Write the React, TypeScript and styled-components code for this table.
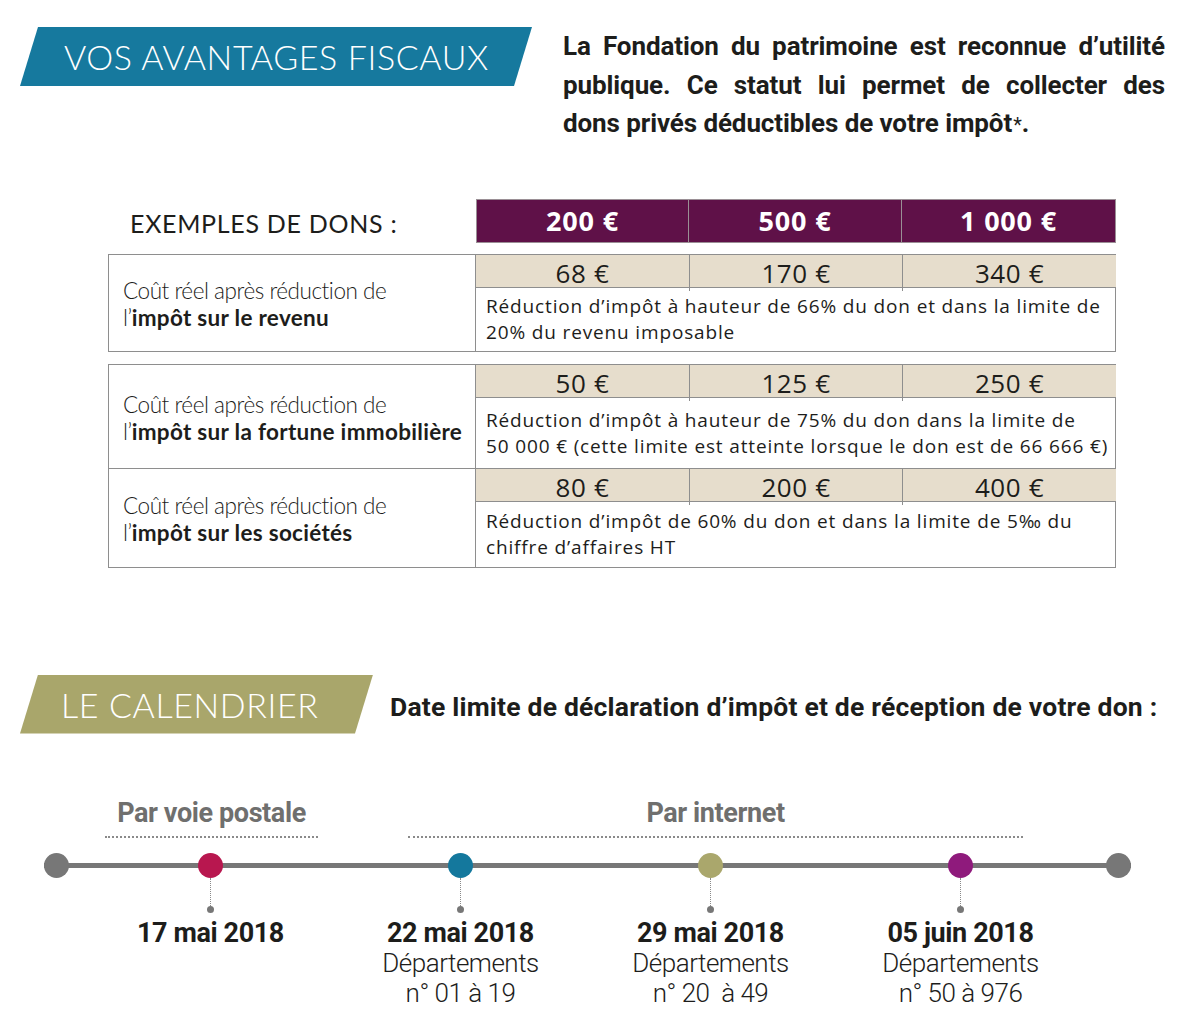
import React from "react";
import styled, { createGlobalStyle } from "styled-components";

const Global = createGlobalStyle`
  html, body { margin: 0; padding: 0; background: #ffffff; }
  body { font-family: "Open Sans", "Liberation Sans", sans-serif; color: #1d1d1b; }
  * { box-sizing: border-box; }
`;

const Page = styled.div`
  width: 1200px;
  height: 1023px;
  overflow: hidden;
  padding-top: 27px;
`;

const Intro = styled.section`
  display: flex;
  align-items: flex-start;
`;

const Banner = styled.div<{ $bg: string; $w: number; $pad: number }>`
  margin-left: 20px;
  width: ${(p) => p.$w}px;
  height: 59px;
  flex: none;
  background: ${(p) => p.$bg};
  clip-path: polygon(18px 0, 100% 0, calc(100% - 18px) 100%, 0 100%);
  display: flex;
  align-items: center;
  padding-left: ${(p) => p.$pad}px;
  color: #ffffff;
  font-family: "Lato", "Liberation Sans", sans-serif;
  font-weight: 300;
  font-size: 34px;
  letter-spacing: 0.6px;
  white-space: nowrap;
`;

const Lead = styled.div`
  margin: 0 0 0 31px;
  width: 602px;
  font-family: "Roboto", "Liberation Sans", sans-serif;
  font-weight: 700;
  font-size: 26px;
  line-height: 38.5px;
  letter-spacing: -0.1px;
  color: #1d1d1b;
`;

const LeadLine = styled.div<{ $last?: boolean }>`
  text-align: ${(p) => (p.$last ? "left" : "justify")};
  text-align-last: ${(p) => (p.$last ? "left" : "justify")};
  white-space: nowrap;
`;

const Star = styled.span`
  font-weight: 400;
  font-size: 20px;
  margin-left: 1px;
`;

const Table = styled.section`
  margin: 54px 0 0 108px;
  width: 1008px;
  display: flex;
  flex-direction: column;
`;

const HeaderRow = styled.div`
  display: grid;
  grid-template-columns: 368px 213px 213px 214px;
  height: 44px;
`;

const HeaderLabel = styled.div`
  display: flex;
  align-items: center;
  padding-left: 22px;
  padding-top: 4px;
  font-family: "Lato", "Liberation Sans", sans-serif;
  font-size: 25px;
  font-weight: 400;
  letter-spacing: 0.7px;
  color: #1d1d1b;
`;

const HeaderCell = styled.div`
  background: #5f1148;
  border: 1px solid #9a8f95;
  border-left-width: 0;
  &:nth-child(2) { border-left-width: 1px; }
  display: flex;
  align-items: center;
  justify-content: center;
  color: #ffffff;
  font-family: "Open Sans", "Liberation Sans", sans-serif;
  font-weight: 700;
  font-size: 27px;
  letter-spacing: 0.8px;
`;

const Group = styled.div<{ $mt: number }>`
  margin-top: ${(p) => p.$mt}px;
  border: 1px solid #8e8e8e;
  display: flex;
  flex-direction: column;
`;

const Row = styled.div<{ $divider?: boolean }>`
  display: grid;
  grid-template-columns: 367px 640px;
  border-top: ${(p) => (p.$divider ? "1px solid #8e8e8e" : "none")};
`;

const Label = styled.div`
  border-right: 1px solid #8e8e8e;
  display: flex;
  flex-direction: column;
  justify-content: center;
  padding: 3px 0 0 14px;
  font-family: "Lato", "Liberation Sans", sans-serif;
  font-weight: 300;
  font-size: 22.5px;
  line-height: 27px;
  letter-spacing: -0.45px;
  color: #1d1d1b;
  white-space: nowrap;
`;

const Strong = styled.strong`
  font-weight: 700;
  letter-spacing: 0.3px;
`;

const Detail = styled.div`
  display: flex;
  flex-direction: column;
`;

const Amounts = styled.div`
  display: grid;
  grid-template-columns: 213px 213px 214px;
  height: 33px;
  background: #e6ddcc;
  border-bottom: 1px solid #8e8e8e;
`;

const Amount = styled.div`
  display: flex;
  align-items: center;
  justify-content: center;
  border-left: 1px solid #8e8e8e;
  &:first-child { border-left: none; }
  font-family: "Open Sans", "Liberation Sans", sans-serif;
  font-weight: 400;
  font-size: 26px;
  letter-spacing: 0.6px;
  color: #1d1d1b;
`;

const Note = styled.div<{ $h: number }>`
  height: ${(p) => p.$h}px;
  display: flex;
  align-items: center;
  padding: 0 6px 0 10px;
  font-family: "Open Sans", "Liberation Sans", sans-serif;
  font-size: 19px;
  line-height: 26px;
  letter-spacing: 0.85px;
  color: #1d1d1b;
  white-space: nowrap;
`;

const Calendar = styled.section`
  margin-top: 107px;
`;

const CalHead = styled.div`
  display: flex;
  align-items: center;
`;

const CalTitle = styled.h2`
  margin: 4px 0 0 17px;
  font-family: "Roboto", "Liberation Sans", sans-serif;
  font-weight: 700;
  font-size: 26.5px;
  letter-spacing: 0.2px;
  color: #1d1d1b;
  white-space: nowrap;
`;

const Channels = styled.div`
  display: flex;
  margin-top: 64px;
  padding-left: 105px;
  gap: 90px;
`;

const Channel = styled.div<{ $w: number }>`
  width: ${(p) => p.$w}px;
  text-align: center;
  font-family: "Roboto", "Liberation Sans", sans-serif;
  font-weight: 700;
  font-size: 27px;
  line-height: 30px;
  letter-spacing: -0.4px;
  color: #6f6f6e;
  padding-bottom: 8px;
  border-bottom: 2px dotted #8a8a8a;
`;

const Timeline = styled.div`
  margin: 15px 0 0 44px;
  width: 1087px;
  display: flex;
  justify-content: space-between;
  align-items: flex-start;
  background: linear-gradient(#777777, #777777) no-repeat 0 10px / 100% 5px;
`;

const Dot = styled.div<{ $c: string }>`
  width: 25px;
  height: 25px;
  border-radius: 50%;
  background: ${(p) => p.$c};
  flex: none;
`;

const Steps = styled.div`
  display: grid;
  grid-template-columns: repeat(4, 250px);
  margin-left: -4px;
`;

const Step = styled.div`
  display: flex;
  flex-direction: column;
  align-items: center;
`;

const Connector = styled.div`
  width: 0;
  height: 28px;
  border-left: 1px dotted #8a8a8a;
`;

const Pin = styled.div`
  width: 7px;
  height: 7px;
  border-radius: 50%;
  background: #777777;
`;

const Date = styled.div`
  margin-top: 5px;
  font-family: "Roboto", "Liberation Sans", sans-serif;
  font-weight: 700;
  font-size: 27px;
  line-height: 30px;
  letter-spacing: -0.4px;
  color: #1d1d1b;
`;

const Sub = styled.div`
  font-family: "Roboto", "Liberation Sans", sans-serif;
  font-weight: 300;
  font-size: 26px;
  line-height: 30px;
  letter-spacing: -0.5px;
  color: #1d1d1b;
  text-align: center;
`;

type Group = {
  amounts: string[];
  bold: string;
  lines: [string, string];
  h: number;
};

const TaxRow: React.FC<{ g: Group; divider?: boolean }> = ({ g, divider }) => (
  <Row $divider={divider}>
    <Label>
      <span>Coût réel après réduction de</span>
      <span>
        l’<Strong>{g.bold}</Strong>
      </span>
    </Label>
    <Detail>
      <Amounts>
        {g.amounts.map((a) => (
          <Amount key={a}>{a}</Amount>
        ))}
      </Amounts>
      <Note $h={g.h}>
        <span>
          {g.lines[0]}
          <br />
          {g.lines[1]}
        </span>
      </Note>
    </Detail>
  </Row>
);

const revenu: Group = {
  amounts: ["68 €", "170 €", "340 €"],
  bold: "impôt sur le revenu",
  lines: [
    "Réduction d’impôt à hauteur de 66% du don et dans la limite de",
    "20% du revenu imposable",
  ],
  h: 63,
};

const fortune: Group = {
  amounts: ["50 €", "125 €", "250 €"],
  bold: "impôt sur la fortune immobilière",
  lines: [
    "Réduction d’impôt à hauteur de 75% du don dans la limite de",
    "50 000 € (cette limite est atteinte lorsque le don est de 66 666 €)",
  ],
  h: 70,
};

const societes: Group = {
  amounts: ["80 €", "200 €", "400 €"],
  bold: "impôt sur les sociétés",
  lines: [
    "Réduction d’impôt de 60% du don et dans la limite de 5‰ du",
    "chiffre d’affaires HT",
  ],
  h: 65,
};

const steps = [
  { c: "#b8174f", date: "17 mai 2018" },
  { c: "#14789d", date: "22 mai 2018", dep: "n° 01 à 19" },
  { c: "#aaa76c", date: "29 mai 2018", dep: "n° 20\u00a0 à 49" },
  { c: "#8f1a7c", date: "05 juin 2018", dep: "n° 50 à 976" },
];

const App: React.FC = () => (
  <Page>
    <Global />
    <Intro>
      <Banner $bg="#16799e" $w={512} $pad={44}>
        VOS AVANTAGES FISCAUX
      </Banner>
      <Lead>
        <LeadLine>La Fondation du patrimoine est reconnue d’utilité</LeadLine>
        <LeadLine>publique. Ce statut lui permet de collecter des</LeadLine>
        <LeadLine $last>
          dons privés déductibles de votre impôt<Star>*</Star>.
        </LeadLine>
      </Lead>
    </Intro>

    <Table>
      <HeaderRow>
        <HeaderLabel>EXEMPLES DE DONS :</HeaderLabel>
        <HeaderCell>200 €</HeaderCell>
        <HeaderCell>500 €</HeaderCell>
        <HeaderCell>1 000 €</HeaderCell>
      </HeaderRow>

      <Group $mt={11}>
        <TaxRow g={revenu} />
      </Group>

      <Group $mt={12}>
        <TaxRow g={fortune} />
        <TaxRow g={societes} divider />
      </Group>
    </Table>

    <Calendar>
      <CalHead>
        <Banner $bg="#a9a66b" $w={353} $pad={41}>
          LE CALENDRIER
        </Banner>
        <CalTitle>Date limite de déclaration d’impôt et de réception de votre don :</CalTitle>
      </CalHead>

      <Channels>
        <Channel $w={213}>Par voie postale</Channel>
        <Channel $w={615}>Par internet</Channel>
      </Channels>

      <Timeline>
        <Dot $c="#777777" />
        <Steps>
          {steps.map((s) => (
            <Step key={s.date}>
              <Dot $c={s.c} />
              <Connector />
              <Pin />
              <Date>{s.date}</Date>
              {s.dep && (
                <>
                  <Sub>Départements</Sub>
                  <Sub>{s.dep}</Sub>
                </>
              )}
            </Step>
          ))}
        </Steps>
        <Dot $c="#777777" />
      </Timeline>
    </Calendar>
  </Page>
);

export default App;
